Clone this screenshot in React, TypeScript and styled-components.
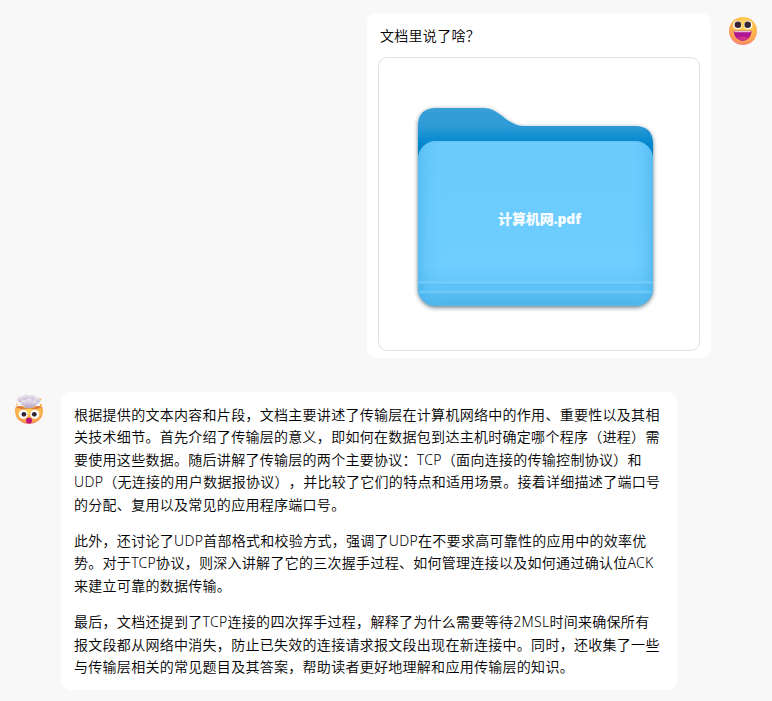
import React from 'react';
import styled, { createGlobalStyle } from 'styled-components';

const GlobalStyle = createGlobalStyle`
  *, *::before, *::after { box-sizing: border-box; }
  body {
    margin: 0;
    background: #f8f8f8;
    overflow: hidden;
  }
`;

const Chat = styled.main`
  width: 772px;
  height: 701px;
  padding: 13px 14px 0;
  display: flex;
  flex-direction: column;
  gap: 34px;
  background: #f8f8f8;
  color: #000;
  font-family: 'Noto Sans', 'Noto Sans CJK SC', sans-serif;
  font-size: 14px;
  font-weight: 350;
  line-height: 22.4px;
  letter-spacing: 0.285px;
  text-spacing-trim: space-all;
`;

const Message = styled.article<{ $own?: boolean }>`
  display: flex;
  flex-direction: ${({ $own }) => ($own ? 'row-reverse' : 'row')};
  align-items: flex-start;
  gap: 17px;
`;

const Avatar = styled.div`
  width: 30px;
  height: 36px;
  flex: none;
  display: flex;
  align-items: center;
  justify-content: center;
`;

const Bubble = styled.div<{ $width: number; $height: number; $pad: string }>`
  width: ${({ $width }) => $width}px;
  height: ${({ $height }) => $height}px;
  padding: ${({ $pad }) => $pad};
  border-radius: 9px;
  background: #fff;
`;

const Question = styled.p`
  margin: 0 0 10px 2px;
`;

const Attachment = styled.div`
  width: 322px;
  height: 294px;
  border: 1px solid #e1e1e1;
  border-radius: 9px;
  overflow: hidden;

  svg { display: block; }
`;

const Paragraph = styled.p`
  margin: 0;

  & + & { margin-top: 14px; }
`;

const Line = styled.span`
  display: block;
  white-space: nowrap;
`;

const FileName = styled.text`
  font-family: 'Open Sans', 'Noto Sans CJK SC', sans-serif;
  font-size: 14px;
  font-weight: 800;
  letter-spacing: 0;
  fill: #f6fcff;
`;

const GrinningFace = () => (
  <svg width="30" height="30" viewBox="0 0 30 30">
    <defs>
      <radialGradient id="grin" cx=".55" cy=".3" r=".75">
        <stop offset="0" stopColor="#ffdb62" />
        <stop offset=".5" stopColor="#fcbd4a" />
        <stop offset=".78" stopColor="#fb9d58" />
        <stop offset="1" stopColor="#f0707f" />
      </radialGradient>
    </defs>
    <circle cx="15" cy="15" r="14" fill="url(#grin)" />
    <circle cx="9.4" cy="9" r="4.3" fill="#fff" />
    <circle cx="20.2" cy="9" r="4.3" fill="#fff" />
    <circle cx="9.9" cy="8.8" r="3.3" fill="#3b2432" />
    <circle cx="19.7" cy="8.8" r="3.3" fill="#3b2432" />
    <path d="M5.6 14.8H23.6C23.5 20.6 19.6 24.7 14.7 24.7S5.8 20.6 5.6 14.8Z" fill="#b01591" />
    <path d="M6 14.9H23.2L22.8 15.8Q22.6 16.2 22 16.2H7.2Q6.6 16.2 6.4 15.8Z" fill="#e6bfe0" />
    <path d="M8.6 22Q14.7 18.8 20.6 22Q18.2 24.7 14.7 24.7T8.6 22Z" fill="#cf2f8b" />
  </svg>
);

const ExplodingHead = () => (
  <svg width="30" height="32" viewBox="0 0 30 32">
    <defs>
      <radialGradient id="shock" cx=".5" cy=".28" r=".78">
        <stop offset="0" stopColor="#ffd95f" />
        <stop offset=".5" stopColor="#fbb94a" />
        <stop offset=".8" stopColor="#f89a54" />
        <stop offset="1" stopColor="#f0707c" />
      </radialGradient>
      <linearGradient id="cloud" x1="0" y1="0" x2="0" y2="1">
        <stop offset="0" stopColor="#efebf3" />
        <stop offset="1" stopColor="#c3b4cf" />
      </linearGradient>
    </defs>
    <path d="M1 15Q1.2 12 5 12H25Q28.8 12 29 15V17C29 24.5 23 30 15 30S1 24.5 1 17Z" fill="url(#shock)" />
    <path d="M2 13.2Q5 11.4 8 12.4L11 14L15 12.6L19 14L22 12.4Q26 11.4 28 13.2L22 15.2L15 14.6L8 15.2Z" fill="#dd7a45" />
    <path d="M11 7H19L19.5 14H10.5Z" fill="#bdadc9" />
    <g fill="url(#cloud)">
      <circle cx="6.8" cy="5.3" r="3.2" />
      <circle cx="12.2" cy="3.6" r="3.3" />
      <circle cx="18.2" cy="3.8" r="3.3" />
      <circle cx="23" cy="6.2" r="3.1" />
      <circle cx="9.8" cy="8.8" r="2.9" />
      <circle cx="20.3" cy="9.2" r="2.8" />
      <circle cx="15" cy="8.4" r="3.6" />
    </g>
    <path d="M2 9L4 10L2.6 12ZM25.4 4L27.6 5.2L26.2 6.8ZM26 10H28V12H26Z" fill="#f7b852" />
    <circle cx="9.2" cy="20.2" r="4.5" fill="#fff" />
    <circle cx="20.8" cy="20.2" r="4.5" fill="#fff" />
    <circle cx="9.9" cy="20.3" r="2.4" fill="#352633" />
    <circle cx="20.3" cy="20.3" r="2.4" fill="#352633" />
    <ellipse cx="15" cy="26.4" rx="3" ry="3" fill="#bc147c" />
  </svg>
);

const Folder = () => (
  <svg width="320" height="292" viewBox="379 58 320 292">
    <defs>
      <linearGradient id="back" x1="0" y1="108" x2="0" y2="155" gradientUnits="userSpaceOnUse">
        <stop offset="0" stopColor="#399fd6" />
        <stop offset=".4" stopColor="#2c9ad6" />
        <stop offset=".7" stopColor="#078bd0" />
        <stop offset="1" stopColor="#007bc5" />
      </linearGradient>
      <linearGradient id="front" x1="0" y1="141" x2="0" y2="306" gradientUnits="userSpaceOnUse">
        <stop offset="0" stopColor="#6acbfd" />
        <stop offset=".75" stopColor="#6fcdff" />
        <stop offset=".85" stopColor="#66c7fa" />
        <stop offset="1" stopColor="#4ab3ea" />
      </linearGradient>
      <linearGradient id="edges">
        <stop offset="0" stopColor="#38a8e4" stopOpacity=".45" />
        <stop offset=".04" stopColor="#50baf1" stopOpacity=".25" />
        <stop offset=".12" stopColor="#6dccff" stopOpacity="0" />
        <stop offset=".9" stopColor="#6dccff" stopOpacity="0" />
        <stop offset=".96" stopColor="#50baf1" stopOpacity=".25" />
        <stop offset="1" stopColor="#38a8e4" stopOpacity=".45" />
      </linearGradient>
      <filter id="shadow" x="-10%" y="-10%" width="120%" height="120%">
        <feDropShadow dx="0" dy="1.5" stdDeviation="2" floodColor="#172f3c" floodOpacity=".65" />
      </filter>
      <clipPath id="panel">
        <rect x="418" y="141" width="235" height="165" rx="18" />
      </clipPath>
    </defs>
    <path
      d="M418 126Q418 108 436 108H483C501 108 506 126 524 126H635Q653 126 653 144V288A18 18 0 0 1 635 306H436A18 18 0 0 1 418 288Z"
      fill="url(#back)"
      filter="url(#shadow)"
    />
    <g clipPath="url(#panel)">
      <rect x="418" y="141" width="235" height="165" fill="url(#front)" />
      <rect x="418" y="141" width="235" height="165" fill="url(#edges)" />
      <path d="M418 282.5H653M418 292H653" stroke="#7bd2ff" strokeWidth="3" opacity=".55" />
      <path d="M418 284.5H653M418 294.5H653" stroke="#42ade5" strokeWidth="1" opacity=".25" />
    </g>
    <rect x="418.5" y="141.5" width="234" height="164" rx="17.5" fill="none" stroke="#62bbe8" opacity=".7" />
    <FileName x="498" y="224" textLength="83">计算机网.pdf</FileName>
  </svg>
);

const answer = [
  [
    '根据提供的文本内容和片段，文档主要讲述了传输层在计算机网络中的作用、重要性以及其相',
    '关技术细节。首先介绍了传输层的意义，即如何在数据包到达主机时确定哪个程序（进程）需',
    '要使用这些数据。随后讲解了传输层的两个主要协议：TCP（面向连接的传输控制协议）和',
    'UDP（无连接的用户数据报协议），并比较了它们的特点和适用场景。接着详细描述了端口号',
    '的分配、复用以及常见的应用程序端口号。',
  ],
  [
    '此外，还讨论了UDP首部格式和校验方式，强调了UDP在不要求高可靠性的应用中的效率优',
    '势。对于TCP协议，则深入讲解了它的三次握手过程、如何管理连接以及如何通过确认位ACK',
    '来建立可靠的数据传输。',
  ],
  [
    '最后，文档还提到了TCP连接的四次挥手过程，解释了为什么需要等待2MSL时间来确保所有',
    '报文段都从网络中消失，防止已失效的连接请求报文段出现在新连接中。同时，还收集了一些',
    '与传输层相关的常见题目及其答案，帮助读者更好地理解和应用传输层的知识。',
  ],
];

export default function App() {
  return (
    <>
      <GlobalStyle />
      <Chat lang="zh-CN">
        <Message $own>
          <Avatar><GrinningFace /></Avatar>
          <Bubble $width={344} $height={345} $pad="12px 11px 7px">
            <Question>文档里说了啥？</Question>
            <Attachment><Folder /></Attachment>
          </Bubble>
        </Message>
        <Message>
          <Avatar><ExplodingHead /></Avatar>
          <Bubble $width={616} $height={298} $pad="12px 13px">
            {answer.map((lines) => (
              <Paragraph key={lines[0]}>
                {lines.map((line) => <Line key={line}>{line}</Line>)}
              </Paragraph>
            ))}
          </Bubble>
        </Message>
      </Chat>
    </>
  );
}
